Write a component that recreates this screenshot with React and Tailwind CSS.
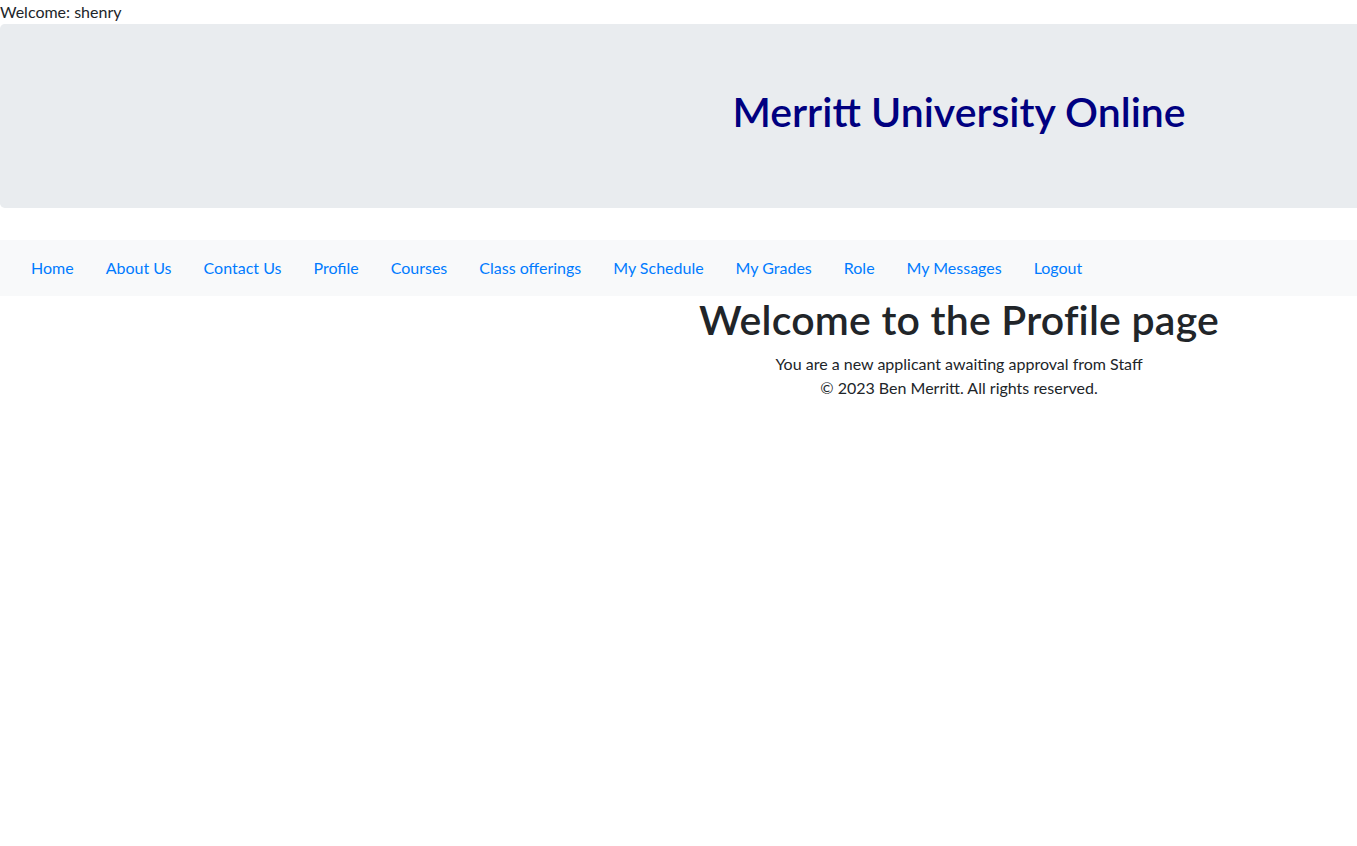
const links = [
  'Home',
  'About Us',
  'Contact Us',
  'Profile',
  'Courses',
  'Class offerings',
  'My Schedule',
  'My Grades',
  'Role',
  'My Messages',
  'Logout',
];

const App = () => {
  return (
    <div className="w-full overflow-hidden bg-white text-[#212529] text-base leading-6 font-['Lato',sans-serif]">
      <div className="w-[1918px]">
        <div>Welcome: shenry</div>

        <div className="bg-[#e9ecef] rounded-l-[0.3rem] px-8 py-16 mb-8 text-center">
          <h1 className="text-[41px] leading-[48px] font-semibold text-[#000080] mb-2">Merritt University Online</h1>
        </div>

        <nav className="bg-[#f8f9fa] px-[15px] py-2">
          <ul className="flex items-center">
            {links.map((link) => (
              <li key={link}>
                <a href="#" className="block px-4 py-2 text-[#007bff]">
                  {link}
                </a>
              </li>
            ))}
          </ul>
        </nav>

        <div className="text-center">
          <h1 className="text-[41px] leading-[48px] font-semibold mb-2 tracking-[0.2px]">Welcome to the Profile page</h1>
          <p>You are a new applicant awaiting approval from Staff</p>
          <p>© 2023 Ben Merritt. All rights reserved.</p>
        </div>
      </div>
    </div>
  );
};

export default App;
